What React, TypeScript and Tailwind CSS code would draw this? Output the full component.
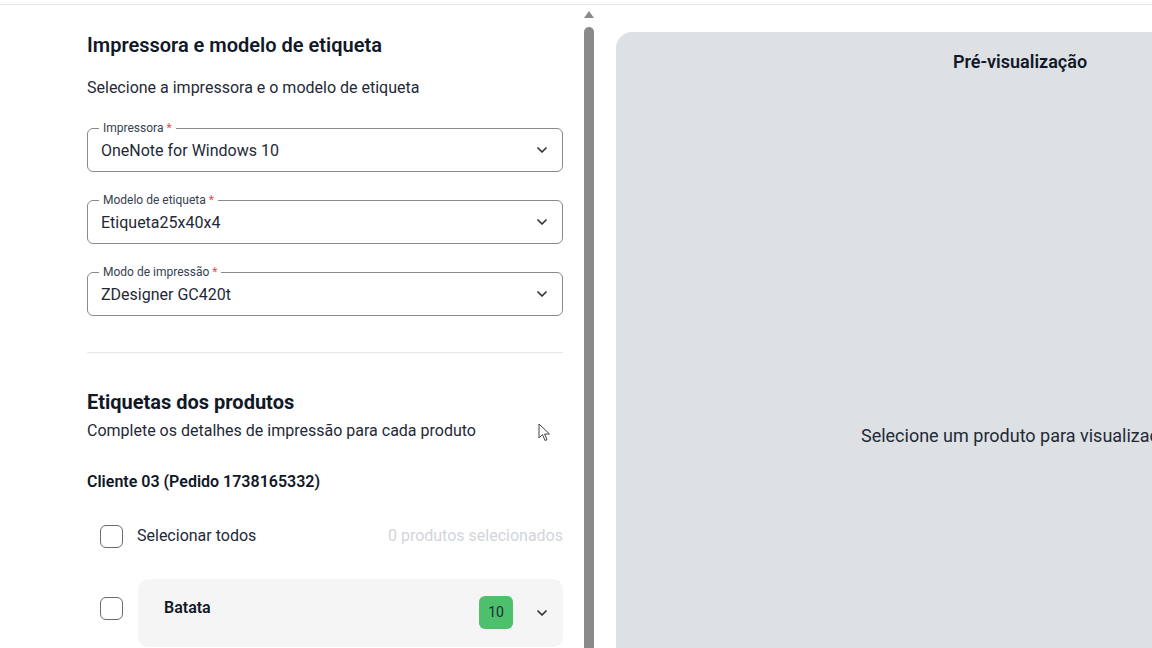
import React from "react";

function Chevron() {
  return (
    <svg width="16" height="16" viewBox="0 0 24 24" fill="none" stroke="#333" strokeWidth="2.6" strokeLinecap="round" strokeLinejoin="round">
      <path d="M6 9l6 6 6-6" />
    </svg>
  );
}

function SelectField({ label, value }: { label: string; value: string }) {
  return (
    <div className="relative h-[44px] rounded-md border border-[#8a8a8a] flex items-center pl-[13px] pr-[12px]">
      <span className="absolute -top-[9px] left-[11px] bg-white px-[4px] text-[12px] leading-4 text-[#374151]">
        {label} <span className="text-[#d9534f]">*</span>
      </span>
      <span className="flex-1 text-[16px] leading-6 pt-[1px] text-[#1f2937]">{value}</span>
      <Chevron />
    </div>
  );
}

function Checkbox() {
  return <div className="w-[23px] h-[23px] rounded-md border-[1.5px] border-[#6b6b6b] bg-white shrink-0" />;
}

export default function App() {
  return (
    <div className="w-[1152px] h-[648px] overflow-hidden bg-white relative font-['Roboto',sans-serif]">
      <div className="h-[5px] border-b border-gray-200" />
      <div className="flex">
        <div className="w-[584px] shrink-0 pl-[87px] pr-[21px] pt-[26px]">
          <h2 className="text-[20px] leading-7 font-semibold text-[#111827]">Impressora e modelo de etiqueta</h2>
          <p className="mt-[17px] text-[16px] leading-6 text-[#1f2937]">Selecione a impressora e o modelo de etiqueta</p>

          <div className="mt-[28px] flex flex-col gap-[28px]">
            <SelectField label="Impressora" value="OneNote for Windows 10" />
            <SelectField label="Modelo de etiqueta" value="Etiqueta25x40x4" />
            <SelectField label="Modo de impressão" value="ZDesigner GC420t" />
          </div>

          <div className="mt-[36px] border-t border-gray-200" />

          <h2 className="mt-[35px] text-[20px] leading-7 font-bold text-[#111827]">Etiquetas dos produtos</h2>
          <p className="mt-[3px] text-[16px] leading-6 text-[#1f2937]">Complete os detalhes de impressão para cada produto</p>

          <p className="mt-[27px] text-[16px] leading-6 font-semibold text-[#111827]">Cliente 03 (Pedido 1738165332)</p>

          <div className="mt-[30px] h-6 flex items-center pl-[13px]">
            <Checkbox />
            <span className="ml-[14px] text-[16px] text-[#1f2937]">Selecionar todos</span>
            <span className="ml-auto text-[16px] text-[#d1d5db]">0 produtos selecionados</span>
          </div>

          <div className="mt-[31px] flex items-start pl-[13px]">
            <div className="mt-[18px]">
              <Checkbox />
            </div>
            <div className="ml-[15px] flex-1 h-[68px] rounded-[10px] bg-[#f5f5f5] flex items-start pl-[26px] pr-[13px] pt-[17px]">
              <span className="text-[16px] leading-6 font-semibold text-[#111827]">Batata</span>
              <div className="ml-auto w-[34px] h-[33px] rounded-md bg-[#4cc06a] flex items-center justify-center text-[14px] text-[#1f2937]">
                10
              </div>
              <div className="ml-[21px] mt-[9px]">
                <Chevron />
              </div>
            </div>
          </div>
        </div>

        <div className="w-[10px] shrink-0 flex flex-col items-center">
          <svg width="10" height="8" viewBox="0 0 10 8" className="mt-[6px]">
            <path d="M5 0L10 7H0z" fill="#8a8a8a" />
          </svg>
          <div className="mt-[8px] w-[10px] h-[700px] rounded-t-full bg-[#8a8a8a]" />
        </div>

        <div className="ml-[22px] mt-[27px] w-[808px] h-[700px] shrink-0 rounded-tl-2xl bg-[#dde1e4] flex flex-col items-center pt-[17px]">
          <p className="text-[18px] leading-[26px] font-semibold text-[#111827]">Pré-visualização</p>
          <p className="mt-[348px] text-[18px] leading-[26px] text-[#1f2937] whitespace-nowrap">Selecione um produto para visualização</p>
        </div>
      </div>

      <svg className="absolute left-[538px] top-[423px]" width="13" height="19" viewBox="0 0 13 19">
        <path d="M1 1L1 15L4.5 11.5L7 17.5L9 16.7L6.6 11H11.5Z" fill="white" stroke="#444" strokeWidth="1" strokeLinejoin="round" />
      </svg>
    </div>
  );
}
